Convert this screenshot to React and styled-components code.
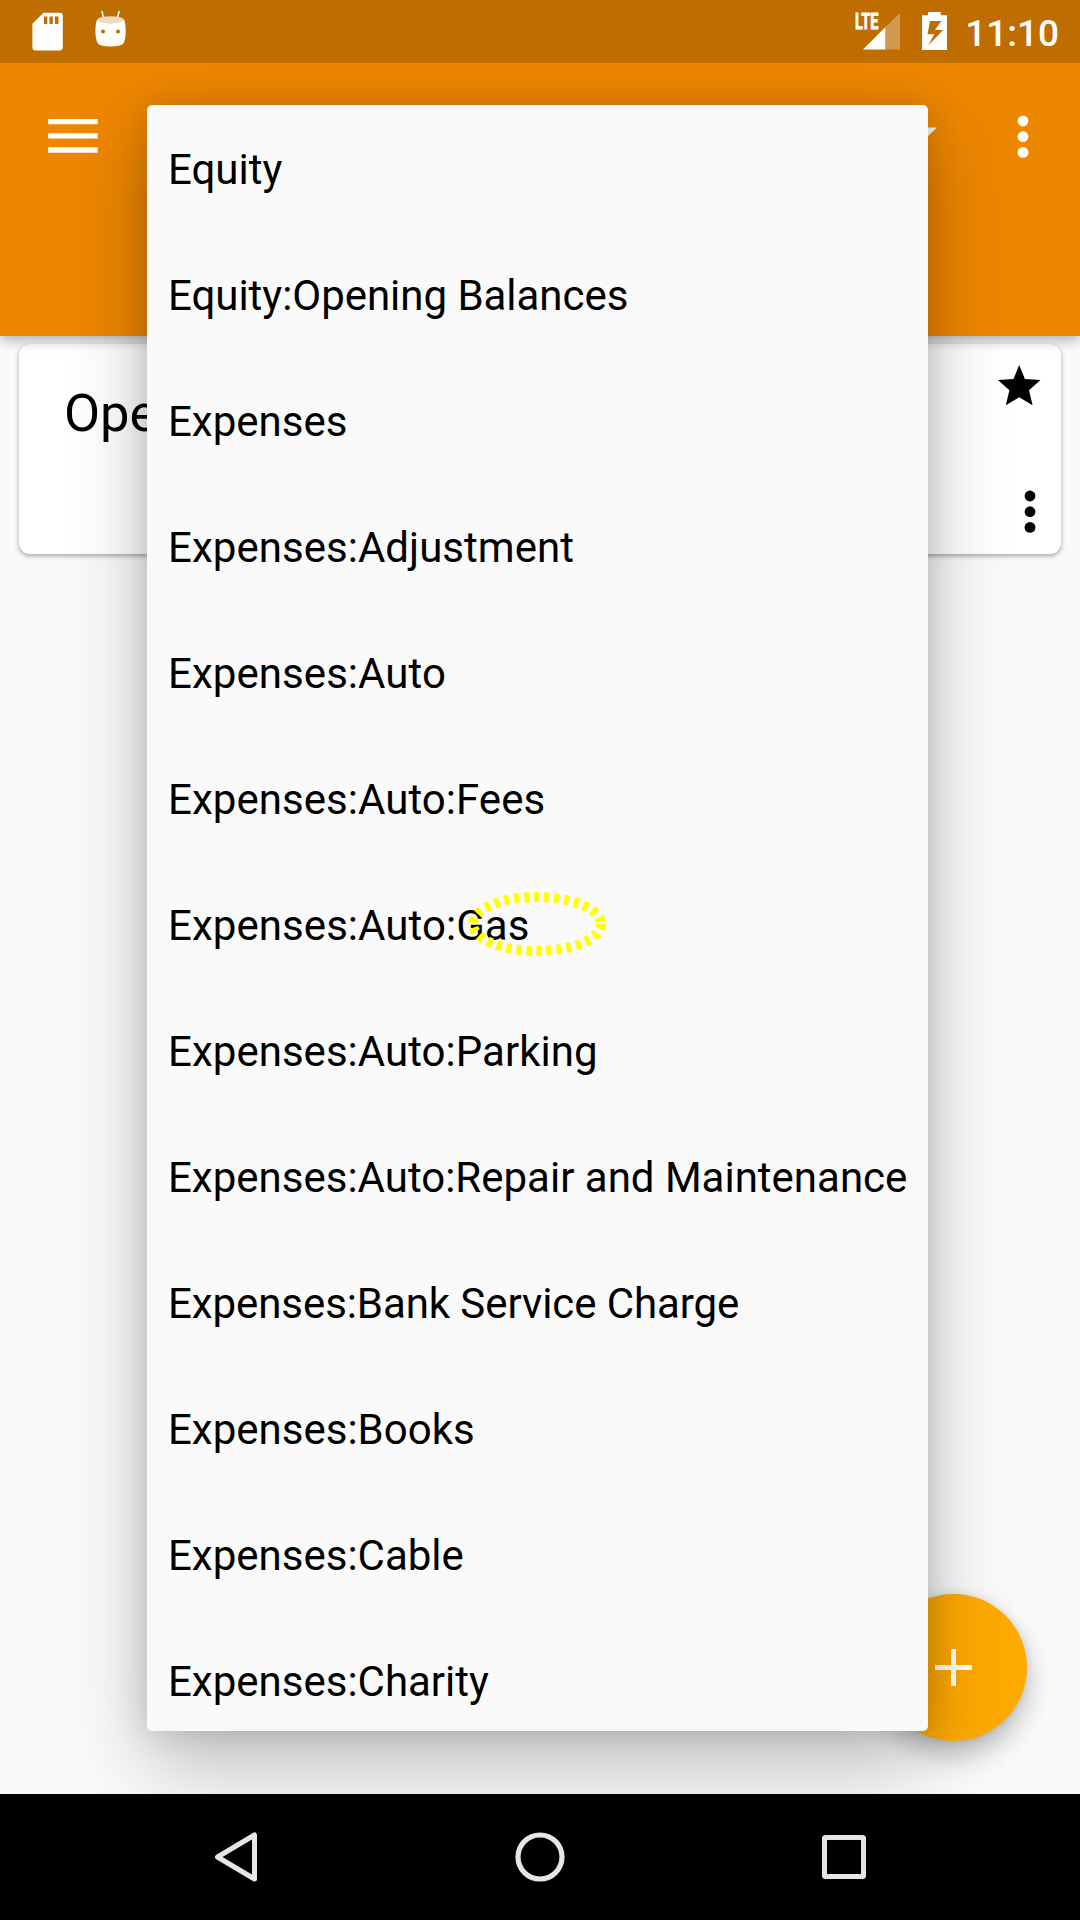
import React from "react";
import styled, { createGlobalStyle } from "styled-components";

const GlobalStyle = createGlobalStyle`
  * { box-sizing: border-box; }
  body { margin: 0; background: #fafafa; }
`;

const Screen = styled.div`
  position: relative;
  display: flex;
  flex-direction: column;
  width: 1080px;
  height: 1920px;
  overflow: hidden;
  background: #fafafa;
  color: #000;
  font-family: Roboto, "Noto Sans", sans-serif;
`;

const StatusBar = styled.header`
  position: relative;
  z-index: 3;
  display: flex;
  justify-content: space-between;
  height: 63px;
  flex: none;
  padding: 0 21px 0 32px;
  background: #bf6c00;
  color: #fff;
`;

const StatusGroup = styled.div`
  display: flex;
  align-items: flex-start;
  gap: ${(p) => p.$gap}px;
`;

const Icon = styled.svg`
  display: block;
  flex: none;
  width: ${(p) => p.$w}px;
  height: ${(p) => p.$h}px;
  margin-top: ${(p) => p.$top || 0}px;
  margin-right: ${(p) => p.$right || 0}px;
`;

const Signal = styled.div`
  display: flex;
  align-items: flex-start;
  margin-top: 12px;
`;

const Network = styled.span`
  width: 8px;
  font-size: 22px;
  font-weight: 700;
  line-height: 19px;
  -webkit-text-stroke: 0.8px #fff;
  transform: scaleX(0.66);
  transform-origin: left;
  white-space: nowrap;
`;

const Clock = styled.span`
  margin-left: -4px;
  font-size: 37px;
  font-weight: 500;
  line-height: 68px;
`;

const AppBar = styled.div`
  display: flex;
  position: relative;
  z-index: 1;
  flex: none;
  height: 273px;
  padding-left: 48px;
  padding-right: 51px;
  background: #ee8600;
  box-shadow: 0 4px 12px rgba(0, 0, 0, 0.3);
`;

const Spacer = styled.div`
  flex: ${(p) => (p.$w ? `0 0 ${p.$w}px` : 1)};
`;

const Content = styled.main`
  flex: 1;
  padding: 8px 19px 0;
`;

const Card = styled.article`
  display: flex;
  justify-content: space-between;
  height: 210px;
  padding: 0 20px 0 45px;
  border-radius: 11px;
  background: #fff;
  box-shadow: 0 2px 5px rgba(0, 0, 0, 0.35);
`;

const CardTitle = styled.h2`
  margin: 38px 0 0;
  font-size: 52.5px;
  font-weight: 400;
  line-height: 62px;
  white-space: nowrap;
`;

const CardActions = styled.div`
  display: flex;
  flex-direction: column;
  align-items: flex-end;
`;

const MenuPopup = styled.ul`
  position: absolute;
  z-index: 2;
  left: 147px;
  top: 105px;
  width: 781px;
  height: 1626px;
  margin: 0;
  padding: 0;
  overflow: hidden;
  border-radius: 5px;
  background: #fafafa;
  box-shadow: 0 32px 80px rgba(0, 0, 0, 0.26), 0 0 30px rgba(0, 0, 0, 0.13);
`;

const MenuItem = styled.li`
  display: flex;
  align-items: center;
  height: 126px;
  padding: 2px 21px 0;
  font-size: 42px;
  line-height: 49px;
  letter-spacing: ${(p) => p.$tracking || 0}px;
  white-space: nowrap;
`;

const Highlight = styled.svg`
  position: absolute;
  z-index: 3;
  left: 460px;
  top: 884px;
  width: 154px;
  height: 80px;
`;

const Fab = styled.button`
  position: absolute;
  left: 880px;
  top: 1594px;
  display: flex;
  align-items: center;
  justify-content: center;
  width: 147px;
  height: 147px;
  padding: 0;
  border: 0;
  border-radius: 50%;
  background: #ffaa00;
  box-shadow: 0 14px 28px rgba(0, 0, 0, 0.26), 0 0 8px rgba(0, 0, 0, 0.1);
`;

const NavBar = styled.nav`
  position: relative;
  z-index: 3;
  display: flex;
  justify-content: space-between;
  flex: none;
  height: 126px;
  padding: 36px 212px 0;
  background: #000;
`;

const accounts = [
  { name: "Equity" },
  { name: "Equity:Opening Balances", tracking: -0.03 },
  { name: "Expenses" },
  { name: "Expenses:Adjustment", tracking: 0.04 },
  { name: "Expenses:Auto", tracking: 0.06 },
  { name: "Expenses:Auto:Fees", tracking: 0.05 },
  { name: "Expenses:Auto:Gas", tracking: 0.06 },
  { name: "Expenses:Auto:Parking", tracking: 0.03 },
  { name: "Expenses:Auto:Repair and Maintenance" },
  { name: "Expenses:Bank Service Charge", tracking: -0.08 },
  { name: "Expenses:Books" },
  { name: "Expenses:Cable" },
  { name: "Expenses:Charity" },
];

function Dots({ fill, top, right }) {
  return (
    <Icon $w={12} $h={44} $top={top} $right={right} viewBox="0 0 12 44" fill={fill}>
      <circle cx="6" cy="6" r="5.4" />
      <circle cx="6" cy="21.7" r="5.4" />
      <circle cx="6" cy="37.4" r="5.4" />
    </Icon>
  );
}

export default function App() {
  return (
    <Screen>
      <GlobalStyle />
      <StatusBar>
        <StatusGroup $gap={32}>
          <Icon $w={31} $h={39} $top={12} viewBox="0 0 31 39">
            <path
              fill="#fff"
              fillRule="evenodd"
              d="M11.5.7H27.5Q30.8.7 30.8 4V35Q30.8 38.6 27.5 38.6H4Q.4 38.6 .4 35V11.8ZM12 4.5V12H15.3V4.5ZM17.5 4.5V12H20.8V4.5ZM23 4.5V12H26.5V4.5Z"
            />
          </Icon>
          <Icon $w={32} $h={38} $top={10} viewBox="0 0 32 38">
            <path d="M7 1.5L8.7 9M24 1.5L22.3 9" stroke="#fff" strokeWidth="1.5" strokeLinecap="round" />
            <path
              fill="#fff"
              d="M2.3 9.5Q8 13.3 15.5 13.3T29 9.5Q30.7 13 30.7 21T28.5 33.5Q25.5 36.5 15.5 36.5T2.8 33.5Q.4 29 .4 21T2.3 9.5Z"
            />
            <ellipse cx="15.6" cy="9.7" rx="13.3" ry="3.5" fill="#efdbc0" />
            <circle cx="8" cy="21.5" r="2" fill="#bf6c00" />
            <circle cx="23" cy="21.5" r="2" fill="#bf6c00" />
          </Icon>
        </StatusGroup>
        <StatusGroup $gap={22}>
          <Signal>
            <Network>LTE</Network>
            <Icon $w={37} $h={37} $top={1} viewBox="0 0 37 37">
              <path d="M37 0V36.5H22V14.5Z" fill="#d39950" />
              <path d="M22.2 14.3V36.5H0Z" fill="#fff" />
            </Icon>
          </Signal>
          <Icon $w={25} $h={38} $top={12} viewBox="0 0 25 38">
            <path
              fill="#fff"
              fillRule="evenodd"
              d="M6 0H18.7V3.2H25V38H0V3.2H6ZM8 9L5.5 22.3H12.2L6.3 33.5L21 18H13L19.3 9Z"
            />
          </Icon>
          <Clock>11:10</Clock>
        </StatusGroup>
      </StatusBar>

      <AppBar>
        <Icon $w={50} $h={36} $top={55} viewBox="0 0 50 36" fill="#fff">
          <path d="M.2 1H49.8V6.2H.2ZM.2 15.3H49.8V20.5H.2ZM.2 29.3H49.8V34.7H.2Z" />
        </Icon>
        <Spacer />
        <Icon $w={28} $h={14} $top={64} viewBox="0 0 28 14">
          <path d="M0 .4H28L14 14Z" fill="#f4f4f4" />
        </Icon>
        <Spacer $w={80} />
        <Dots fill="#fff" top={52} />
      </AppBar>

      <Content>
        <Card>
          <CardTitle>Ope</CardTitle>
          <CardActions>
            <Icon $w={43} $h={41} $top={21} viewBox="0 0 43 41">
              <path d="M21.2 0L26.9 13.9L42.5 15L31 25.2L34.6 40.3L21.2 32.3L7.8 40.3L11.4 25.2L0 15L15.5 13.9Z" />
            </Icon>
            <Dots fill="#000" top={84} right={5} />
          </CardActions>
        </Card>
      </Content>

      <Fab aria-label="Add">
        <Icon $w={37} $h={37} viewBox="0 0 37 37">
          <path d="M16 0H21V16H37V21H21V37H16V21H0V16H16Z" fill="#fff" />
        </Icon>
      </Fab>

      <MenuPopup>
        {accounts.map(({ name, tracking }) => (
          <MenuItem key={name} $tracking={tracking}>
            {name}
          </MenuItem>
        ))}
      </MenuPopup>

      <Highlight viewBox="0 0 154 80">
        <ellipse
          cx="77"
          cy="40"
          rx="64"
          ry="27"
          fill="none"
          stroke="#ffff00"
          strokeWidth="10"
          strokeDasharray="5 5"
        />
      </Highlight>

      <NavBar>
        <Icon $w={48} $h={54} viewBox="0 0 48 54">
          <path d="M42.5 5V49L5.5 27Z" fill="none" stroke="#e6e6e6" strokeWidth="5" strokeLinejoin="round" />
        </Icon>
        <Icon $w={54} $h={54} viewBox="0 0 54 54">
          <circle cx="27" cy="27" r="22" fill="none" stroke="#e6e6e6" strokeWidth="5.2" />
        </Icon>
        <Icon $w={48} $h={54} viewBox="0 0 48 54">
          <rect x="4.5" y="7.5" width="39" height="39" rx="1" fill="none" stroke="#e6e6e6" strokeWidth="5" />
        </Icon>
      </NavBar>
    </Screen>
  );
}
